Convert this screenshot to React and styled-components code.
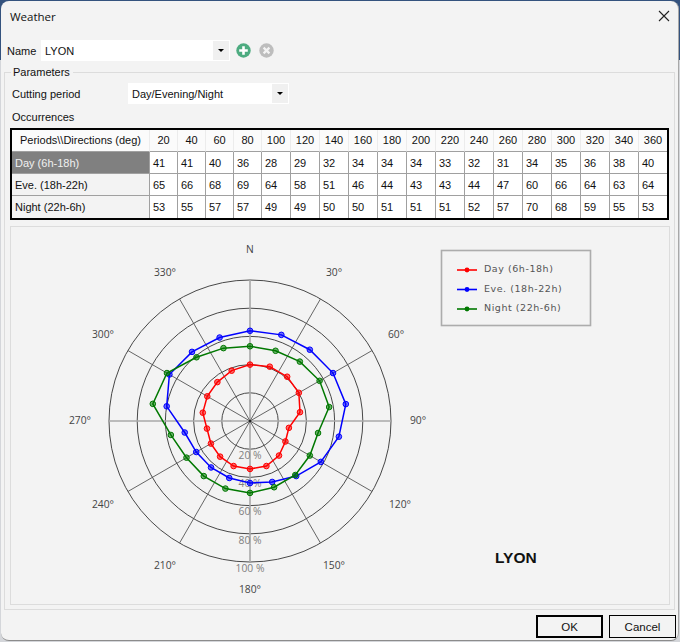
import React from "react";
import styled, { createGlobalStyle } from "styled-components";

const Global = createGlobalStyle`
  html, body { margin: 0; padding: 0; }
  body {
    width: 680px;
    height: 642px;
    overflow: hidden;
    background: linear-gradient(#34527e 0 60px, #d4d6da 60px);
    font-family: "Liberation Sans", Arial, sans-serif;
  }
`;

const Dialog = styled.div`
  box-sizing: border-box;
  width: 678px;
  height: 640px;
  margin: 1px 0 0 1px;
  background: #f3f3f3;
  border-radius: 8px;
  border-right: 1px solid #a8a8a8;
  border-bottom: 1px solid #8c8c8c;
  display: flex;
  flex-direction: column;
  color: #111;
  font-size: 11px;
`;

const TitleBar = styled.div`
  height: 30px;
  padding: 0 8px 0 9px;
  display: flex;
  align-items: center;
  justify-content: space-between;
  font-family: "Open Sans", "Liberation Sans", sans-serif;
  font-size: 11.5px;
`;

const NameRow = styled.div`
  margin-top: 9px;
  height: 21px;
  padding-left: 6px;
  display: flex;
  align-items: center;
`;

const Label = styled.span`
  width: ${(p) => p.$width}px;
  flex: none;
`;

const Combo = styled.div`
  box-sizing: border-box;
  width: ${(p) => p.$width}px;
  height: 21px;
  background: #fff;
  padding-left: 4px;
  display: flex;
  align-items: center;
  justify-content: space-between;
  color: #111;
`;

const ComboArrow = styled.div`
  width: 16px;
  height: 19px;
  margin-right: 1px;
  background: #f0f0f0;
  display: flex;
  align-items: center;
  justify-content: center;
  &::after {
    content: "";
    border-left: 3px solid transparent;
    border-right: 3px solid transparent;
    border-top: 3px solid #000;
  }
`;

const IconRow = styled.div`
  display: flex;
  gap: 8px;
  margin-left: 6px;
`;

const Group = styled.fieldset`
  box-sizing: border-box;
  width: 671px;
  height: 546px;
  margin: 3px 0 0 3px;
  padding: 3px 0 0 7px;
  border: 1px solid #dcdcdc;
  min-width: 0;
`;

const GroupTitle = styled.legend`
  margin-left: -1px;
  padding: 0 3px 0 2px;
  line-height: 16px;
  height: 16px;
`;

const PeriodRow = styled.div`
  display: flex;
  align-items: center;
  height: 21px;
`;

const SectionLabel = styled.div`
  margin-top: 4px;
  height: 20px;
  line-height: 18px;
`;

const Table = styled.table`
  border-collapse: separate;
  border-spacing: 0;
  table-layout: fixed;
  width: 659px;
  margin-left: -2px;
  border: 2px solid #000;
  background: #fff;
  font-family: "Liberation Sans", Arial, sans-serif;
  font-size: 11px;
  color: #111;
`;

const HeadCell = styled.th`
  box-sizing: border-box;
  width: ${(p) => p.$w}px;
  height: 22px;
  padding: 0 0 1px 0;
  font-weight: 400;
  text-align: center;
  background: #fbfbfb;
  border-right: 1px solid #ececec;
  border-bottom: 1px solid #a0a0a0;
  &:last-child { border-right: 0; }
`;

const RowHead = styled.th`
  box-sizing: border-box;
  height: 22px;
  padding: 0 0 0 3px;
  font-weight: 400;
  text-align: left;
  background: ${(p) => (p.$selected ? "#808080" : "#f3f3f3")};
  color: ${(p) => (p.$selected ? "#f0f0f0" : "#111")};
  border-right: 1px solid #a0a0a0;
  border-bottom: 1px solid #a0a0a0;
  tr:last-child > & { border-bottom: 0; }
`;

const Cell = styled.td`
  box-sizing: border-box;
  height: 22px;
  padding: 0 0 0 3px;
  border-right: 1px solid #a0a0a0;
  border-bottom: 1px solid #a0a0a0;
  &:last-child { border-right: 0; }
  tr:last-child > & { border-bottom: 0; }
`;

const ChartPanel = styled.div`
  box-sizing: border-box;
  width: 660px;
  height: 379px;
  margin: 6px 0 0 -2px;
  border: 1px solid #dcdcdc;
  overflow: hidden;
`;

const Footer = styled.div`
  margin-top: 5px;
  padding-right: 2px;
  display: flex;
  justify-content: flex-end;
  gap: 6px;
`;

const Button = styled.button`
  box-sizing: border-box;
  width: ${(p) => p.$w}px;
  height: 23px;
  padding: 0;
  background: #f3f3f3;
  border: ${(p) => (p.$primary ? "2px" : "1px")} solid #000;
  font-family: "Liberation Sans", Arial, sans-serif;
  font-size: 11.5px;
  color: #111;
`;

const ChartSvg = styled.svg`
  display: block;
  font-family: "Open Sans", "DejaVu Sans", sans-serif;
`;

const CloseIcon = () => (
  <svg width="12" height="12" viewBox="0 0 12 12">
    <path d="M1 1 L11 11 M11 1 L1 11" stroke="#222" strokeWidth="1.1" fill="none" />
  </svg>
);

const AddIcon = () => (
  <svg width="15" height="15" viewBox="0 0 15 15">
    <circle cx="7.5" cy="7.5" r="7.2" fill="#4dab80" />
    <path d="M7.5 3.2 V11.8 M3.2 7.5 H11.8" stroke="#fff" strokeWidth="2.6" />
  </svg>
);

const RemoveIcon = () => (
  <svg width="15" height="15" viewBox="0 0 15 15">
    <circle cx="7.5" cy="7.5" r="7.2" fill="#bdbdbd" />
    <path d="M4.6 4.6 L10.4 10.4 M10.4 4.6 L4.6 10.4" stroke="#f3f3f3" strokeWidth="2.2" />
  </svg>
);

const directions = [20, 40, 60, 80, 100, 120, 140, 160, 180, 200, 220, 240, 260, 280, 300, 320, 340, 360];
const series = [
  { name: "Day (6h-18h)", color: "#ff0000", values: [41, 41, 40, 36, 28, 29, 32, 34, 34, 34, 33, 32, 31, 34, 35, 36, 38, 40] },
  { name: "Eve. (18h-22h)", color: "#0000ff", values: [65, 66, 68, 69, 64, 58, 51, 46, 44, 43, 43, 44, 47, 60, 66, 64, 63, 64] },
  { name: "Night (22h-6h)", color: "#007800", values: [53, 55, 57, 57, 49, 49, 50, 50, 51, 51, 51, 52, 57, 70, 68, 59, 55, 53] },
];

// Chart coordinates are relative to the panel's inner corner (11, 227).
const CX = 239;
const CY = 194;
const SCALE = 1.41;
const polar = (deg, r) => {
  const a = (deg * Math.PI) / 180;
  return [CX + r * Math.sin(a), CY - r * Math.cos(a)];
};

const angleLabels = [
  ["N", 250, 249], ["30°", 334, 272], ["60°", 396, 334], ["90°", 418, 420],
  ["120°", 400, 504], ["150°", 334, 565], ["180°", 250, 589], ["210°", 165, 565],
  ["240°", 103, 504], ["270°", 80, 420], ["300°", 103, 334], ["330°", 165, 272],
];
const percentLabels = [
  ["20 %", 455], ["40 %", 483], ["60 %", 511], ["80 %", 540], ["100 %", 568],
];

const Chart = () => (
  <ChartSvg width="658" height="377" viewBox="0 0 658 377">
    {[20, 40, 60, 80, 100].map((p) => (
      <circle key={p} cx={CX} cy={CY} r={p * SCALE} fill="none" stroke="#333" strokeWidth="0.9" />
    ))}
    {[30, 60, 120, 150, 210, 240, 300, 330].map((d) => {
      const [x, y] = polar(d, 141);
      return <line key={d} x1={CX} y1={CY} x2={x} y2={y} stroke="#555" strokeWidth="0.9" />;
    })}
    <line x1={CX} y1={CY - 141} x2={CX} y2={CY + 141} stroke="#a8a8a8" strokeWidth="1.6" />
    <line x1={CX - 141} y1={CY} x2={CX + 141} y2={CY} stroke="#a8a8a8" strokeWidth="1.6" />
    <circle cx={CX} cy={CY} r="1.5" fill="#222" />
    {angleLabels.map(([t, x, y]) => (
      <text key={t} x={x - 11} y={y - 227 + 4} textAnchor="middle" fontSize="10.3" fill="#444">{t}</text>
    ))}
    {percentLabels.map(([t, y]) => (
      <text key={t} x={CX} y={y - 227 + 4} textAnchor="middle" fontSize="10.3" fill="#808080">{t}</text>
    ))}
    {series.map((s) => {
      const pts = s.values.map((v, i) => polar(directions[i], v * SCALE));
      return (
        <g key={s.name}>
          <polygon points={pts.map((p) => p.join(",")).join(" ")} fill="none" stroke={s.color} strokeWidth="1.5" />
          {pts.map(([x, y], i) => (
            <circle key={i} cx={x} cy={y} r="2.8" fill={s.color} fillOpacity="0.55" stroke={s.color} strokeWidth="1" />
          ))}
        </g>
      );
    })}
    <rect x="430.5" y="23.5" width="149" height="75" fill="none" stroke="#acacac" strokeWidth="1.6" />
    {series.map((s, i) => {
      const y = 43 + i * 19.5;
      return (
        <g key={s.name}>
          <line x1="446" x2="466" y1={y} y2={y} stroke={s.color} strokeWidth="1.6" />
          <circle cx="456" cy={y} r="2.4" fill={s.color} />
          <text x="473" y={y + 2} fontSize="9.5" letterSpacing="0.55" fontFamily="'DejaVu Sans', sans-serif" fill="#555">{s.name}</text>
        </g>
      );
    })}
    <text x="484" y="336" fontSize="15.5" fontWeight="700" fontFamily="'Liberation Sans', Arial, sans-serif" fill="#111">LYON</text>
  </ChartSvg>
);

export default function App() {
  return (
    <>
      <Global />
      <Dialog>
        <TitleBar>
          <span>Weather</span>
          <CloseIcon />
        </TitleBar>
        <NameRow>
          <Label $width={34}>Name</Label>
          <Combo $width={189}>
            LYON
            <ComboArrow />
          </Combo>
          <IconRow>
            <AddIcon />
            <RemoveIcon />
          </IconRow>
        </NameRow>
        <Group>
          <GroupTitle>Parameters</GroupTitle>
          <PeriodRow>
            <Label $width={116}>Cutting period</Label>
            <Combo $width={161}>
              Day/Evening/Night
              <ComboArrow />
            </Combo>
          </PeriodRow>
          <SectionLabel>Occurrences</SectionLabel>
          <Table>
            <thead>
              <tr>
                <HeadCell $w={138}>Periods\\Directions (deg)</HeadCell>
                {directions.map((d, i) => (
                  <HeadCell key={d} $w={i < 4 || i === 17 ? 28 : 29}>{d}</HeadCell>
                ))}
              </tr>
            </thead>
            <tbody>
              {series.map((s, r) => (
                <tr key={s.name}>
                  <RowHead $selected={r === 0}>{s.name}</RowHead>
                  {s.values.map((v, i) => (
                    <Cell key={i}>{v}</Cell>
                  ))}
                </tr>
              ))}
            </tbody>
          </Table>
          <ChartPanel>
            <Chart />
          </ChartPanel>
        </Group>
        <Footer>
          <Button $w={67} $primary>OK</Button>
          <Button $w={67}>Cancel</Button>
        </Footer>
      </Dialog>
    </>
  );
}
